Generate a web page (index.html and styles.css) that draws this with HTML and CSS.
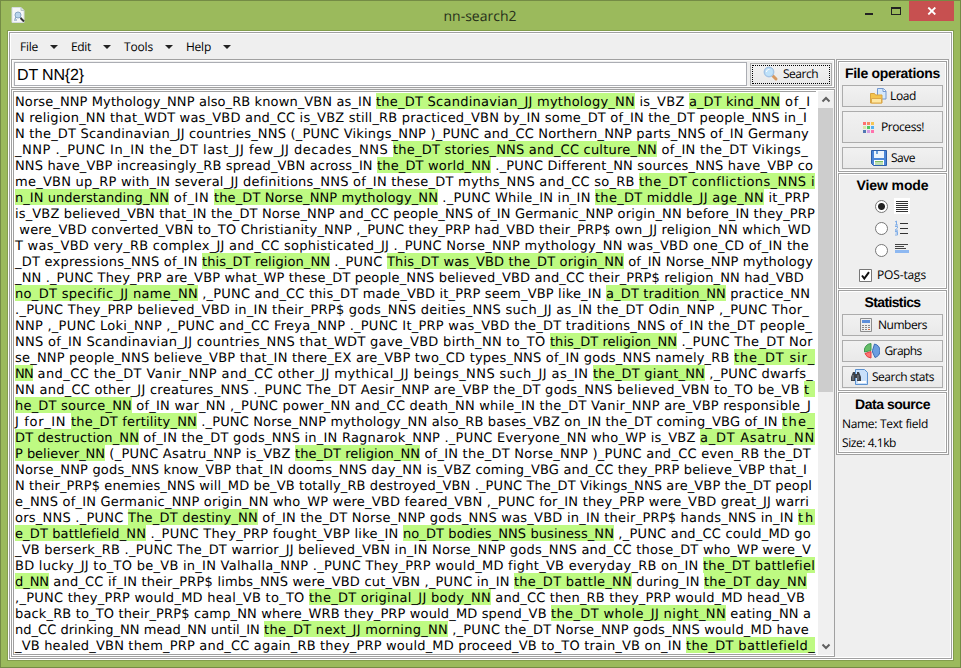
FILE: index.html
```html
<!DOCTYPE html>
<html lang="en">
<head>
<meta charset="utf-8">
<title>nn-search2</title>
<link rel="stylesheet" href="styles.css">
</head>
<body>
<div class="window">
  <header class="titlebar">
    <svg class="appicon" width="16" height="17" viewBox="0 0 16 17"><path d="M1 .5h9l3 3v12H1z" fill="#f6f7f8" stroke="#d5dce0"/><path d="M10 .5v3h3" fill="#dce2e6" stroke="#b8c4c8"/><path d="M4 12l1.500-3m5 3L9 9M3 13h3" stroke="#7696b8" fill="none"/><circle cx="7" cy="8" r="3" fill="#b9d4ec" stroke="#86a5c4"/><path d="M9.500 11l3.500 3.500" stroke="#333" stroke-width="2"/></svg>
    <span class="title"><span data-width="73">nn-search2</span></span>
    <div class="controls"><i class="min"></i><i class="max"></i><span class="close"><svg width="10" height="8" viewBox="0 0 10 8"><path d="M1.3.5l7 7m0-7l-7 7" stroke="#fff" stroke-width="1.8"/></svg></span></div>
  </header>
  <div class="client"><div class="edge">
    <nav class="menu">
      <span class="item"><span data-width="18">File</span></span><i class="arrow"></i>
      <span class="item m2"><span data-width="20">Edit</span></span><i class="arrow"></i>
      <span class="item m3"><span data-width="29">Tools</span></span><i class="arrow"></i>
      <span class="item m4"><span data-width="25">Help</span></span><i class="arrow"></i>
    </nav>
    <div class="body">
      <main class="main">
        <div class="searchrow">
          <div class="entry"><span data-width="67">DT NN{2}</span></div>
          <div class="search"><div class="focus">
            <svg width="16" height="16" viewBox="0 0 16 16"><path d="M9.500 9.500L13 13" stroke="#d69a62" stroke-width="3" stroke-linecap="round"/><circle cx="6" cy="6" r="4.700" fill="#bfe2fa" stroke="#a5c5e6" stroke-width="1.500"/><path d="M3.500 6a2.500 2.500 0 0 1 3-2.500" stroke="#fff" fill="none"/></svg>
            <span data-width="35">Search</span></div></div>
        </div>
        <div class="textframe">
          <div class="text" id="text"></div>
          <div class="scroll">
            <svg width="16" height="17" viewBox="0 0 16 17"><path d="M4.500 10.500L8 7l3.500 3.500" stroke="#606060" stroke-width="2" fill="none"/></svg>
            <div class="thumb"></div>
            <svg class="down" width="16" height="17" viewBox="0 0 16 17"><path d="M4.500 6.500L8 10l3.500-3.500" stroke="#606060" stroke-width="2" fill="none"/></svg>
          </div>
        </div>
      </main>
      <aside class="side">
        <section class="panel files">
          <h2><span data-width="95">File operations</span></h2>
          <div class="btn nudge"><svg width="17" height="16" viewBox="0 0 17 16"><path d="M7.500.5h6l2.500 2.500v8h-8.500z" fill="#d5e8fb" stroke="#7398d0"/><path d="M13 .5v3h3" fill="#fff" stroke="#7398d0"/><path d="M.5 15V5.500h4l1 1.500H12V15z" fill="#f4c44e" stroke="#d9a441"/><path d="M1.500 10.500h10V15h-10z" fill="#ffe7a0" stroke="#dda94a"/></svg><span class="g3" data-width="26">Load</span></div>
          <div class="btn tall nudge2"><svg width="11" height="11" viewBox="0 0 11 11"><path d="M0 0h3v3H0z" fill="#ff6f6f"/><path d="M4 0h3v3H4z" fill="#f58a62"/><path d="M8 0h3v3H8z" fill="#f7c553"/><path d="M0 4h3v3H0z" fill="#d3e8a5"/><path d="M4 4h3v3H4z" fill="#4fc960"/><path d="M8 4h3v3H8z" fill="#55b0ed"/><path d="M0 8h3v3H0z" fill="#5278b3"/><path d="M4 8h3v3H4z" fill="#d49be0"/><path d="M8 8h3v3H8z" fill="#ff72ac"/></svg><span class="g7" data-width="43">Process!</span></div>
          <div class="btn nudge"><svg width="16" height="16" viewBox="0 0 16 16"><path d="M.5.5h15v15h-13l-2-2z" fill="#4b86d8" stroke="#2d5faa"/><path d="M3 1h10v7H3z" fill="#edf5fd"/><path d="M5 1h2v3H5z" fill="#6aa0dc"/><path d="M3 10h10v5H3z" fill="#fff"/><path d="M4 11h8v1.500H4zm0 2.500h8v1H4z" fill="#80bf62"/></svg><span class="g4" data-width="24">Save</span></div>
        </section>
        <section class="panel view">
          <h2><span data-width="72">View mode</span></h2>
          <div class="opt"><i class="radio on"></i><svg width="16" height="16" viewBox="0 0 16 16"><path d="M0 0h16v16H0z" fill="#fff"/><path d="M2 3.500h12m-12 2h12m-12 2h12m-12 2h12m-12 2h12m-12 2h12" stroke="#333"/></svg></div>
          <div class="opt"><i class="radio"></i><svg width="16" height="16" viewBox="0 0 16 16"><path d="M6 3.500h8m-8 5h8m-8 5h8" stroke="#333"/><path d="M1 2l1.500-1v4M1 5h3M1 6.500h2.500v1.500L1 10.200h3M1 11.500h2.500v3.500H1m.5-2h2" stroke="#80aee8" fill="none"/></svg></div>
          <div class="opt"><i class="radio"></i><svg width="16" height="16" viewBox="0 0 16 16"><path d="M1 2.500h13m-13 2h9m-9 2h11" stroke="#444"/><path d="M1 8h14v3H1z" fill="#8db8f1"/></svg></div>
          <div class="check"><svg width="13" height="13" viewBox="0 0 13 13"><path d="M.5.5h12v12H.5z" fill="#fff" stroke="#777"/><path d="M3 6.500l2.300 3L10 3.200" stroke="#111" stroke-width="2" fill="none"/></svg><span data-width="49">POS-tags</span></div>
        </section>
        <section class="panel stats">
          <h2><span data-width="56">Statistics</span></h2>
          <div class="btn nudge2"><svg width="12" height="14" viewBox="0 0 12 14"><path d="M.5.5h11v13H.5z" fill="#eee" stroke="#8c8c8c"/><path d="M2 2h8v3H2z" fill="#5d8fda"/><path d="M2 7h2v1H2zm3 0h2v1H5zm3 0h2v1H8zM2 9h2v1H2zm3 0h2v1H5zm3 0h2v1H8zM2 11h2v1H2zm3 0h2v1H5z" fill="#888"/><path d="M8 11h2v1H8z" fill="#e06b3d"/></svg><span class="g6" data-width="49">Numbers</span></div>
          <div class="btn"><svg width="16" height="16" viewBox="0 0 16 16"><path d="M7 7.500V.5a7 7 0 0 0-6.500 8.500z" fill="#66bd68" stroke="#3d9851"/><path d="M7 8.500v6.500A7 7 0 0 1 1 10.500z" fill="#ff7474" stroke="#df4343"/><path d="M8.500 7.500L10.500 1a7 7 0 0 1 .5 13.500L8.500 9z" fill="#6b9ee0" stroke="#3b6cb4"/></svg><span class="g5" data-width="37">Graphs</span></div>
          <div class="btn"><svg width="17" height="16" viewBox="0 0 17 16"><path d="M4.500.5h9l3 3v12h-12z" fill="#c9e0fa" stroke="#5b91d0"/><path d="M7 12h8v2H7z" fill="#fff"/><path d="M2 3h2v2h2V3h2l2 5v4H6V9H4v3H0V8z" fill="#3c4047"/><path d="M2 6v5m5-5v5" stroke="#858b94"/></svg><span class="g4" data-width="62">Search stats</span></div>
        </section>
        <section class="panel data">
          <h2><span data-width="75">Data source</span></h2>
          <p><span data-width="86">Name: Text field</span></p>
          <p><span data-width="54">Size: 4.1kb</span></p>
        </section>
      </aside>
    </div>
  </div></div>
</div>
<script src="app.js"></script>
</body>
</html>
```
FILE: styles.css
```css
* { box-sizing: border-box; }
body { margin: 0; font: 12px/16px "Open Sans", "Noto Sans", sans-serif; color: #000; overflow: hidden; }
svg { display: block; flex: none; }
.window { width: 961px; height: 668px; background: #9bba5c; border: 1px solid #748b45; padding: 0 6px; display: flex; flex-direction: column; }
.titlebar { height: 29px; display: flex; flex: none; }
.appicon { margin: 6px 0 0 4px; }
.title { width: 921px; flex: none; text-align: center; font-size: 14px; line-height: 29px; margin-left: -7px; color: #26301a; padding-right: 1px; }
.controls { display: flex; margin-left: -76px; }
.min { width: 8px; height: 2px; background: #222; margin: 12px 18px 0 0; }
.max { width: 10px; height: 8px; border: 1px solid #222; border-top-width: 2px; margin: 6px 8px 0 0; }
.close { width: 45px; height: 20px; flex: none; background: #c75050; display: flex; align-items: center; justify-content: center; }
.client { width: 947px; height: 631px; border: 1px solid #829d4d; background: #fff; padding: 1px; }
.edge { height: 627px; width: 943px; border: 1px solid #a0a0a0; background: #efefef; padding: 1px; box-shadow: inset 0 0 0 1px #fff; }
.menu { height: 25px; display: flex; align-items: center; padding: 1px 0 0 9px; }
.arrow { border: 4px solid transparent; border-top-color: #222; border-bottom: 0; margin: 0 11px 0 12px; }
.item { flex: none; }
.m2 { margin-left: 2px; }
.m3 { margin-left: 2px; }
.m4 { margin-left: 2px; }
.body { display: flex; gap: 1px; }
.main { width: 824px; flex: none; }
.searchrow { height: 29px; border: 1px solid #a0a0a0; box-shadow: inset 0 0 0 1px #fff; display: flex; padding: 2px; gap: 3px; }
.entry { width: 733px; height: 24px; border: 1px solid #abadb3; background: #fff; padding-left: 2px; font: 16px/23px "Liberation Sans", sans-serif; }
.search { width: 82px; height: 23px; margin-top: 1px; border: 1px solid #acacac; background: linear-gradient(#f2f2f2, #e8e8e8); padding: 1px; }
.focus { height: 19px; border: 1px dotted #000; display: flex; align-items: center; gap: 4px; padding: 0 0 1px 10px; }
.textframe { height: 568px; margin-top: 1px; border: 1px solid #a0a0a0; background: #fff; padding: 1px 0 1px 1px; display: flex; justify-content: space-between; }
.text { width: 803px; border: 1px solid #a0a0a0; border-right: 0; padding: 1px 0 0 1px; font: 13px/19px "DejaVu Sans", sans-serif; white-space: pre; text-rendering: geometricPrecision; }
.line { height: 16px; display: flex; }
.hit { background: #befa82; }
.scroll { width: 16px; background: #f0f0f0; display: flex; flex-direction: column; }
.thumb { height: 284px; width: 15px; background: #cdcdcd; }
.down { margin-top: auto; }
.side { width: 113px; height: 396px; border: 1px solid #a0a0a0; background: #fff; padding: 1px; display: flex; flex-direction: column; gap: 1px; }
.panel { border: 1px solid #a0a0a0; background: #efefef; box-shadow: inset 0 0 0 1px #fff; padding: 3px; }
.files { height: 111px; }
.view { height: 116px; }
.stats { height: 101px; }
.data { height: 61px; }
h2 { margin: 0; height: 20px; font: bold 14px/16px "Liberation Sans", sans-serif; text-align: center; }
.view h2 { height: 18px; }
.btn { height: 22px; border: 1px solid #acacac; background: linear-gradient(#f1f1f1, #e9e9e9); display: flex; align-items: center; justify-content: center; margin-bottom: 4px; }
.tall { height: 32px; }
.nudge { padding-left: 1px; }
.nudge2 { padding-left: 2px; }
.g3 { margin-left: 3px; }
.g4 { margin-left: 4px; }
.g5 { margin-left: 5px; }
.g6 { margin-left: 6px; }
.g7 { margin-left: 7px; }
.opt { height: 22px; display: flex; align-items: center; padding-left: 33px; gap: 6px; }
.radio { width: 13px; height: 13px; border: 1px solid #777; border-radius: 50%; background: #fff; }
.on { background: radial-gradient(circle, #222 0 3px, #fff 4px); }
.check { display: flex; align-items: center; gap: 5px; height: 26px; padding: 2px 0 0 17px; }
.data p { margin: 0; height: 19px; }
[data-width] { white-space: pre; text-rendering: geometricPrecision; display: inline-block; }
```
FILE: app.js
```js
// Each line: text run, right edge of the run, ... ; runs starting with "*" are search hits.
const LINES = [
["Norse_NNP Mythology_NNP also_RB known_VBN as_IN ",376,"*the_DT Scandinavian_JJ mythology_NN",635," is_VBZ ",689,"*a_DT kind_NN",780," of_I",811],
["N religion_NN that_WDT was_VBD and_CC is_VBZ still_RB practiced_VBN by_IN some_DT of_IN the_DT people_NNS in_I",807],
["N the_DT Scandinavian_JJ countries_NNS (_PUNC Vikings_NNP )_PUNC and_CC Northern_NNP parts_NNS of_IN Germany",809],
["_NNP ._PUNC In_IN the_DT last_JJ few_JJ decades_NNS ",393,"*the_DT stories_NNS and_CC culture_NN",657," of_IN the_DT Vikings_",808],
["NNS have_VBP increasingly_RB spread_VBN across_IN ",377,"*the_DT world_NN",491," ._PUNC Different_NN sources_NNS have_VBP co",813],
["me_VBN up_RP with_IN several_JJ definitions_NNS of_IN these_DT myths_NNS and_CC so_RB ",639,"*the_DT conflictions_NNS i",815],
["*n_IN understanding_NN",169," of_IN ",214,"*the_DT Norse_NNP mythology_NN",438," ._PUNC While_IN in_IN ",595,"*the_DT middle_JJ age_NN",764," it_PRP",810],
["is_VBZ believed_VBN that_IN the_DT Norse_NNP and_CC people_NNS of_IN Germanic_NNP origin_NN before_IN they_PRP",815],
[" were_VBD converted_VBN to_TO Christianity_NNP ,_PUNC they_PRP had_VBD their_PRP$ own_JJ religion_NN which_WD",811],
["T was_VBD very_RB complex_JJ and_CC sophisticated_JJ ._PUNC Norse_NNP mythology_NN was_VBD one_CD of_IN the",809],
["_DT expressions_NNS of_IN ",202,"*this_DT religion_NN",330," ._PUNC ",387,"*This_DT was_VBD the_DT origin_NN",624," of_IN Norse_NNP mythology",813],
["_NN ._PUNC They_PRP are_VBP what_WP these_DT people_NNS believed_VBD and_CC their_PRP$ religion_NN had_VBD",804],
["*no_DT specific_JJ name_NN",198," ,_PUNC and_CC this_DT made_VBD it_PRP seem_VBP like_IN ",606,"*a_DT tradition_NN",726," practice_NN",810],
["._PUNC They_PRP believed_VBD in_IN their_PRP$ gods_NNS deities_NNS such_JJ as_IN the_DT Odin_NNP ,_PUNC Thor_",809],
["NNP ,_PUNC Loki_NNP ,_PUNC and_CC Freya_NNP ._PUNC It_PRP was_VBD the_DT traditions_NNS of_IN the_DT people_",812],
["NNS of_IN Scandinavian_JJ countries_NNS that_WDT gave_VBD birth_NN to_TO ",550,"*this_DT religion_NN",677," ._PUNC The_DT Nor",813],
["se_NNP people_NNS believe_VBP that_IN there_EX are_VBP two_CD types_NNS of_IN gods_NNS namely_RB ",734,"*the_DT sir_",815],
["*NN",33," and_CC the_DT Vanir_NNP and_CC other_JJ mythical_JJ beings_NNS such_JJ as_IN ",593,"*the_DT giant_NN",705," ,_PUNC dwarfs_",813],
["NN and_CC other_JJ creatures_NNS ._PUNC The_DT Aesir_NNP are_VBP the_DT gods_NNS believed_VBN to_TO be_VB ",804,"*t",815],
["*he_DT source_NN",132," of_IN war_NN ,_PUNC power_NN and_CC death_NN while_IN the_DT Vanir_NNP are_VBP responsible_J",811],
["J for_IN ",71,"*the_DT fertility_NN",197," ._PUNC Norse_NNP mythology_NN also_RB bases_VBZ on_IN the_DT coming_VBG of_IN ",782,"*the_",815],
["*DT destruction_NN",139," of_IN the_DT gods_NNS in_IN Ragnarok_NNP ._PUNC Everyone_NN who_WP is_VBZ ",700,"*a_DT Asatru_NN",815],
["*P believer_NN",105," (_PUNC Asatru_NNP is_VBZ ",295,"*the_DT religion_NN",420," of_IN the_DT Norse_NNP )_PUNC and_CC even_RB the_DT",811],
["Norse_NNP gods_NNS know_VBP that_IN dooms_NNS day_NN is_VBZ coming_VBG and_CC they_PRP believe_VBP that_I",807],
["N their_PRP$ enemies_NNS will_MD be_VB totally_RB destroyed_VBN ._PUNC The_DT Vikings_NNS are_VBP the_DT peopl",812],
["e_NNS of_IN Germanic_NNP origin_NN who_WP were_VBD feared_VBN ,_PUNC for_IN they_PRP were_VBD great_JJ warri",809],
["ors_NNS ._PUNC ",128,"*The_DT destiny_NN",258," of_IN the_DT Norse_NNP gods_NNS was_VBD in_IN their_PRP$ hands_NNS in_IN ",798,"*th",815],
["*e_DT battlefield_NN",146," ._PUNC They_PRP fought_VBP like_IN ",403,"*no_DT bodies_NNS business_NN",614," ,_PUNC and_CC could_MD go",811],
["_VB berserk_RB ._PUNC The_DT warrior_JJ believed_VBN in_IN Norse_NNP gods_NNS and_CC those_DT who_WP were_V",811],
["BD lucky_JJ to_TO be_VB in_IN Valhalla_NNP ._PUNC They_PRP would_MD fight_VB everyday_RB on_IN ",703,"*the_DT battlefiel",815],
["*d_NN",49," and_CC if_IN their_PRP$ limbs_NNS were_VBD cut_VBN ,_PUNC in_IN ",514,"*the_DT battle_NN",632," during_IN ",704,"*the_DT day_NN",807],
[",_PUNC they_PRP would_MD heal_VB to_TO ",309,"*the_DT original_JJ body_NN",491," and_CC then_RB they_PRP would_MD head_VB",805],
["back_RB to_TO their_PRP$ camp_NN where_WRB they_PRP would_MD spend_VB ",551,"*the_DT whole_JJ night_NN",726," eating_NN a",811],
["nd_CC drinking_NN mead_NN until_IN ",264,"*the_DT next_JJ morning_NN",448," ,_PUNC the_DT Norse_NNP gods_NNS would_MD have",809],
["_VB healed_VBN them_PRP and_CC again_RB they_PRP would_MD proceed_VB to_TO train_VB on_IN ",686,"*the_DT battlefield_",815]
];

// Sets the tracking of a run so that it takes up the given width.
function fit(el, width) {
  const natural = el.getBoundingClientRect().width;
  el.style.letterSpacing = (width - natural) / el.textContent.length + "px";
}

const box = document.getElementById("text");
for (const runs of LINES) {
  const line = document.createElement("div");
  line.className = "line";
  box.appendChild(line);
  let x = 15;
  for (let i = 0; i < runs.length; i += 2) {
    const hit = runs[i][0] === "*";
    const span = document.createElement("span");
    if (hit) span.className = "hit";
    span.textContent = hit ? runs[i].slice(1) : runs[i];
    line.appendChild(span);
    fit(span, runs[i + 1] - x);
    x = runs[i + 1];
  }
}
document.querySelectorAll("[data-width]").forEach(el => fit(el, +el.dataset.width));
```
